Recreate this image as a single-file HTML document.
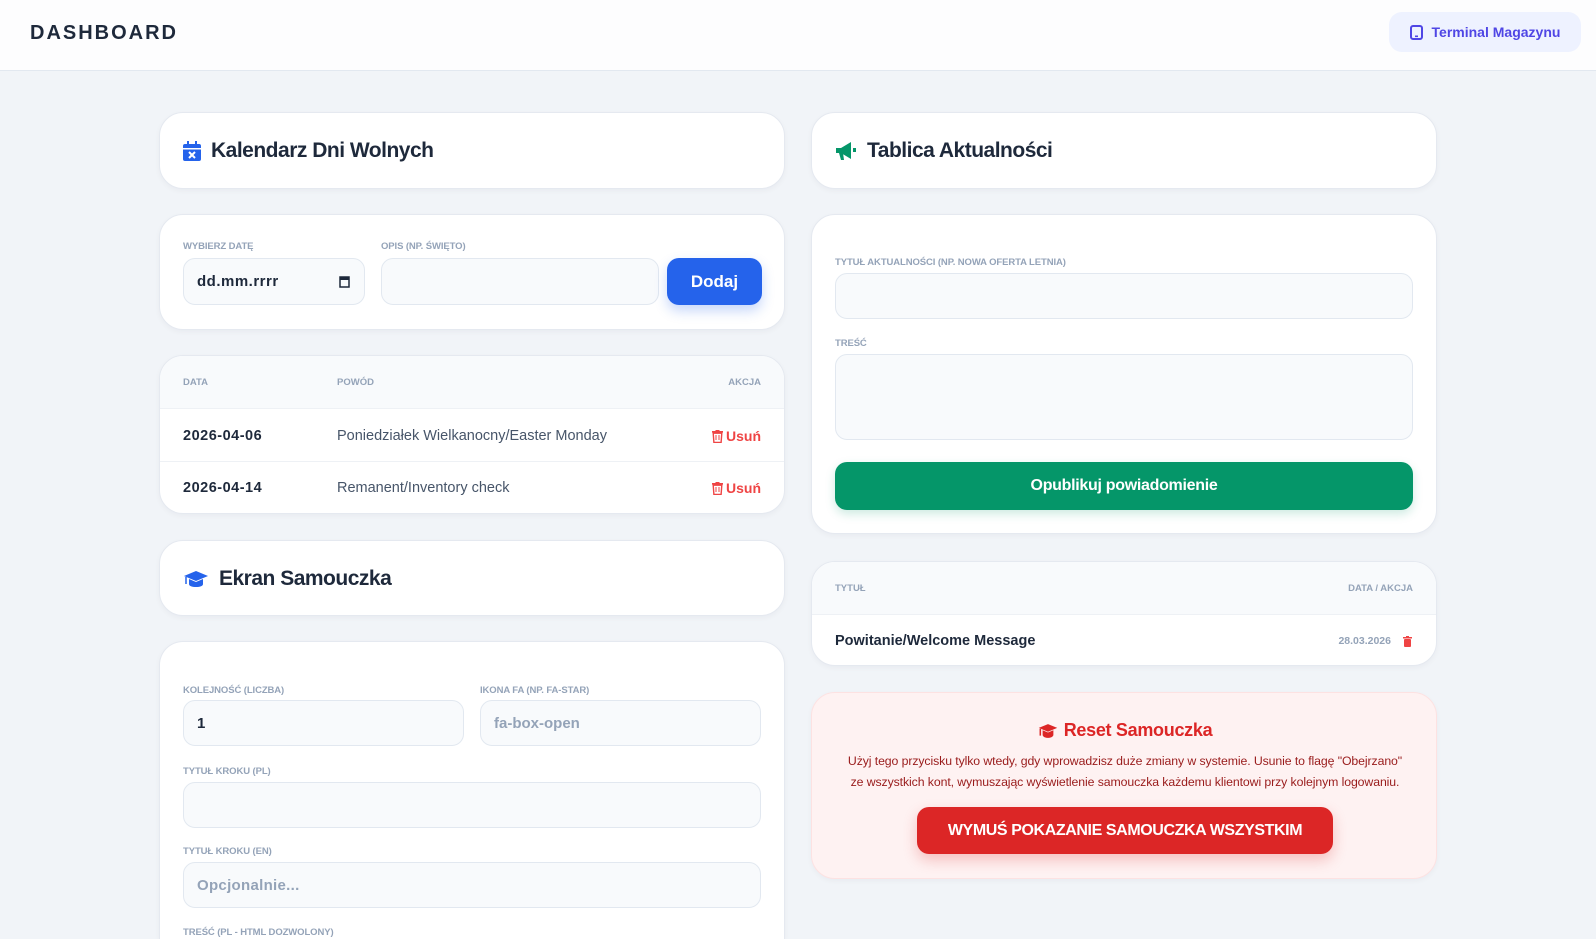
<!DOCTYPE html>
<html><head><meta charset="utf-8"><style>
*{box-sizing:border-box;margin:0;padding:0}
html{width:1596px;height:939px;overflow:hidden}
body{width:1596px;height:939px;overflow:hidden;background:#f1f4f8;font-family:"Liberation Sans",sans-serif;color:#1e293b;position:relative}
.hdr{position:absolute;left:0;top:0;width:1596px;height:71px;background:#fdfdfe;border-bottom:1px solid #e2e8f0}
.a{position:absolute}
.card{position:absolute;background:#fff;border:1px solid #e5e9f0;border-radius:24px;box-shadow:0 2px 6px rgba(15,23,42,.04);overflow:hidden}
.lbl{position:absolute;font-size:9.5px;font-weight:bold;color:#94a3b8;text-transform:uppercase;letter-spacing:-.1px}
.inp{position:absolute;background:#f8fafc;border:1px solid #e2e8f0;border-radius:12px;font-size:15px;font-weight:bold;padding-left:13px;display:flex;align-items:center}
.title{position:absolute;font-size:21px;font-weight:bold;color:#1e293b;letter-spacing:-.5px;display:flex;align-items:center;gap:10px}
.th{font-size:9.5px;font-weight:bold;color:#94a3b8}
.del{display:flex;align-items:center;gap:3px}
</style></head><body>
<div class="hdr">
 <div class="a" style="left:30px;top:22px;font-size:20px;font-weight:bold;letter-spacing:2px;color:#1e293b">DASHBOARD</div>
 <div class="a" style="left:1389px;top:12px;width:192px;height:40px;background:#eef2ff;border-radius:13px;display:flex;align-items:center;justify-content:center;gap:9px;color:#4f46e5;font-size:14px;font-weight:bold">
  <svg width="13" height="15" viewBox="0 0 13 15"><rect x="1" y="1" width="11" height="13" rx="2" fill="none" stroke="#4f46e5" stroke-width="2"/><rect x="5" y="10.5" width="3" height="1.6" fill="#4f46e5"/></svg>Terminal Magazynu</div>
</div>

<div class="card" style="left:159px;top:112px;width:626px;height:77px">
 <div class="title" style="left:23px;top:26px">
  <svg width="18" height="20" viewBox="0 0 18 20"><rect x="4" y="0" width="2" height="4" fill="#2563eb"/><rect x="12" y="0" width="2" height="4" fill="#2563eb"/><rect x="0" y="3" width="18" height="17" rx="2" fill="#2563eb"/><rect x="0" y="7" width="18" height="1.5" fill="#fff"/><path d="M6 11l6 6M12 11l-6 6" stroke="#fff" stroke-width="2"/></svg>Kalendarz Dni Wolnych</div>
</div>
<div class="card" style="left:159px;top:214px;width:626px;height:116px">
 <div class="lbl" style="left:23px;top:26px">Wybierz datę</div>
 <div class="lbl" style="left:221px;top:26px">Opis (np. Święto)</div>
 <div class="inp" style="left:23px;top:43px;width:182px;height:47px;font-weight:bold;letter-spacing:.5px">dd.mm.rrrr<svg class="a" style="right:14px;top:16px" width="11" height="13" viewBox="0 0 11 13"><rect x="1" y="2" width="9" height="10" fill="none" stroke="#1e293b" stroke-width="1.5"/><rect x="1" y="2" width="9" height="3" fill="#1e293b"/></svg></div>
 <div class="inp" style="left:221px;top:43px;width:278px;height:47px"></div>
 <div class="a" style="left:507px;top:43px;width:95px;height:47px;background:#2563eb;border-radius:12px;color:#fff;font-weight:bold;font-size:17px;display:flex;align-items:center;justify-content:center;box-shadow:0 6px 12px rgba(37,99,235,.25)">Dodaj</div>
</div>
<div class="card" style="left:159px;top:355px;width:626px;height:159px">
 <div class="a" style="left:0;top:0;width:626px;height:53px;background:#f8fafc;border-bottom:1px solid #eef1f5"></div>
 <div class="a th" style="left:23px;top:21px">DATA</div>
 <div class="a th" style="left:177px;top:21px">POWÓD</div>
 <div class="a th" style="right:23px;top:21px">AKCJA</div>
 <div class="a" style="left:0;top:105px;width:626px;height:1px;background:#eef1f5"></div>
 <div class="a" style="left:23px;top:72px;font-size:14.5px;font-weight:bold;letter-spacing:.5px">2026-04-06</div>
 <div class="a" style="left:177px;top:72px;font-size:14.5px;color:#475569">Poniedziałek Wielkanocny/Easter Monday</div>
 <div class="a del" style="right:23px;top:72px;font-size:14px;font-weight:bold;color:#ef4444"><svg width="11" height="13" viewBox="0 0 11 13"><rect x="0" y="1" width="11" height="1.6" fill="#ef4444"/><rect x="3.5" y="0" width="4" height="1.2" fill="#ef4444"/><path d="M1.2 3.2h8.6l-.7 9.3H1.9z" fill="none" stroke="#ef4444" stroke-width="1.4"/><path d="M4 5v5M7 5v5" stroke="#ef4444" stroke-width="1"/></svg>Usuń</div>
 <div class="a" style="left:23px;top:124px;font-size:14.5px;font-weight:bold;letter-spacing:.5px">2026-04-14</div>
 <div class="a" style="left:177px;top:124px;font-size:14.5px;color:#475569">Remanent/Inventory check</div>
 <div class="a del" style="right:23px;top:124px;font-size:14px;font-weight:bold;color:#ef4444"><svg width="11" height="13" viewBox="0 0 11 13"><rect x="0" y="1" width="11" height="1.6" fill="#ef4444"/><rect x="3.5" y="0" width="4" height="1.2" fill="#ef4444"/><path d="M1.2 3.2h8.6l-.7 9.3H1.9z" fill="none" stroke="#ef4444" stroke-width="1.4"/><path d="M4 5v5M7 5v5" stroke="#ef4444" stroke-width="1"/></svg>Usuń</div>
</div>
<div class="card" style="left:159px;top:540px;width:626px;height:76px">
 <div class="title" style="left:23px;top:26px"><svg width="26" height="18" viewBox="0 0 26 18"><path d="M13 1L1 6l12 5 12-5z" fill="#2563eb"/><path d="M6 9v5c0 2 3 3 7 3s7-1 7-3V9l-7 3z" fill="#2563eb"/><path d="M3 7v7" stroke="#2563eb" stroke-width="1.5"/></svg>Ekran Samouczka</div>
</div>
<div class="card" style="left:159px;top:641px;width:626px;height:298px;border-bottom:none;border-radius:24px 24px 0 0">
 <div class="lbl" style="left:23px;top:43px">Kolejność (liczba)</div>
 <div class="lbl" style="left:320px;top:43px">Ikona FA (np. fa-star)</div>
 <div class="inp" style="left:23px;top:58px;width:281px;height:46px">1</div>
 <div class="inp" style="left:320px;top:58px;width:281px;height:46px;color:#94a3b8">fa-box-open</div>
 <div class="lbl" style="left:23px;top:124px">Tytuł kroku (PL)</div>
 <div class="inp" style="left:23px;top:140px;width:578px;height:46px"></div>
 <div class="lbl" style="left:23px;top:204px">Tytuł kroku (EN)</div>
 <div class="inp" style="left:23px;top:220px;width:578px;height:46px;color:#94a3b8;letter-spacing:.3px">Opcjonalnie...</div>
 <div class="lbl" style="left:23px;top:285px">Treść (PL - HTML dozwolony)</div>
</div>

<div class="card" style="left:811px;top:112px;width:626px;height:77px">
 <div class="title" style="left:23px;top:26px"><svg width="22" height="20" viewBox="0 0 22 20"><path d="M1 7h5l10-6v17L6 12H1z" fill="#059669"/><path d="M4 12l2 7h3l-1-7z" fill="#059669"/><rect x="18" y="7" width="3" height="4" fill="#059669"/></svg>Tablica Aktualności</div>
</div>
<div class="card" style="left:811px;top:214px;width:626px;height:320px">
 <div class="lbl" style="left:23px;top:42px">Tytuł aktualności (np. Nowa oferta letnia)</div>
 <div class="inp" style="left:23px;top:58px;width:578px;height:46px"></div>
 <div class="lbl" style="left:23px;top:123px">Treść</div>
 <div class="inp" style="left:23px;top:139px;width:578px;height:86px"></div>
 <div class="a" style="left:23px;top:247px;width:578px;height:48px;background:#059669;border-radius:12px;color:#fff;font-weight:bold;font-size:16px;display:flex;align-items:center;justify-content:center;letter-spacing:-.3px;box-shadow:0 4px 10px rgba(5,150,105,.2)">Opublikuj powiadomienie</div>
</div>
<div class="card" style="left:811px;top:561px;width:626px;height:105px">
 <div class="a" style="left:0;top:0;width:626px;height:53px;background:#f8fafc;border-bottom:1px solid #eef1f5"></div>
 <div class="a th" style="left:23px;top:21px">TYTUŁ</div>
 <div class="a th" style="right:23px;top:21px">DATA / AKCJA</div>
 <div class="a" style="left:23px;top:71px;font-size:14.5px;font-weight:bold">Powitanie/Welcome Message</div>
 <div class="a" style="right:45px;top:73px;font-size:10.5px;font-weight:bold;color:#94a3b8">28.03.2026</div>
 <svg class="a" style="right:24px;top:74px" width="9" height="11" viewBox="0 0 9 11"><rect x="0" y="1" width="9" height="1.5" fill="#ef4444"/><rect x="3" y="0" width="3" height="1" fill="#ef4444"/><rect x="1" y="3" width="7" height="8" rx="1" fill="#ef4444"/></svg>
</div>
<div class="card" style="left:811px;top:692px;width:626px;height:187px;background:#fef2f2;border-color:#fde2e2">
 <div class="a" style="left:0;width:626px;top:27px;display:flex;justify-content:center;align-items:center;gap:6px;font-size:18px;font-weight:bold;color:#dc2626;letter-spacing:-.3px"><svg width="20" height="16" viewBox="0 0 26 20"><path d="M13 1L1 6l12 5 12-5z" fill="#dc2626"/><path d="M6 9v6c0 2 3 4 7 4s7-2 7-4V9l-7 3z" fill="#dc2626"/><path d="M3 7v9" stroke="#dc2626" stroke-width="2"/></svg>Reset Samouczka</div>
 <div class="a" style="left:0;width:626px;top:58px;text-align:center;font-size:12.3px;line-height:21px;color:#991b1b;letter-spacing:-.1px">Użyj tego przycisku tylko wtedy, gdy wprowadzisz duże zmiany w systemie. Usunie to flagę "Obejrzano"<br>ze wszystkich kont, wymuszając wyświetlenie samouczka każdemu klientowi przy kolejnym logowaniu.</div>
 <div class="a" style="left:105px;top:114px;width:416px;height:47px;background:#dc2626;border-radius:12px;color:#fff;font-weight:bold;font-size:16px;display:flex;align-items:center;justify-content:center;letter-spacing:-.4px;box-shadow:0 6px 14px rgba(220,38,38,.25)">WYMUŚ POKAZANIE SAMOUCZKA WSZYSTKIM</div>
</div>
</body></html>
